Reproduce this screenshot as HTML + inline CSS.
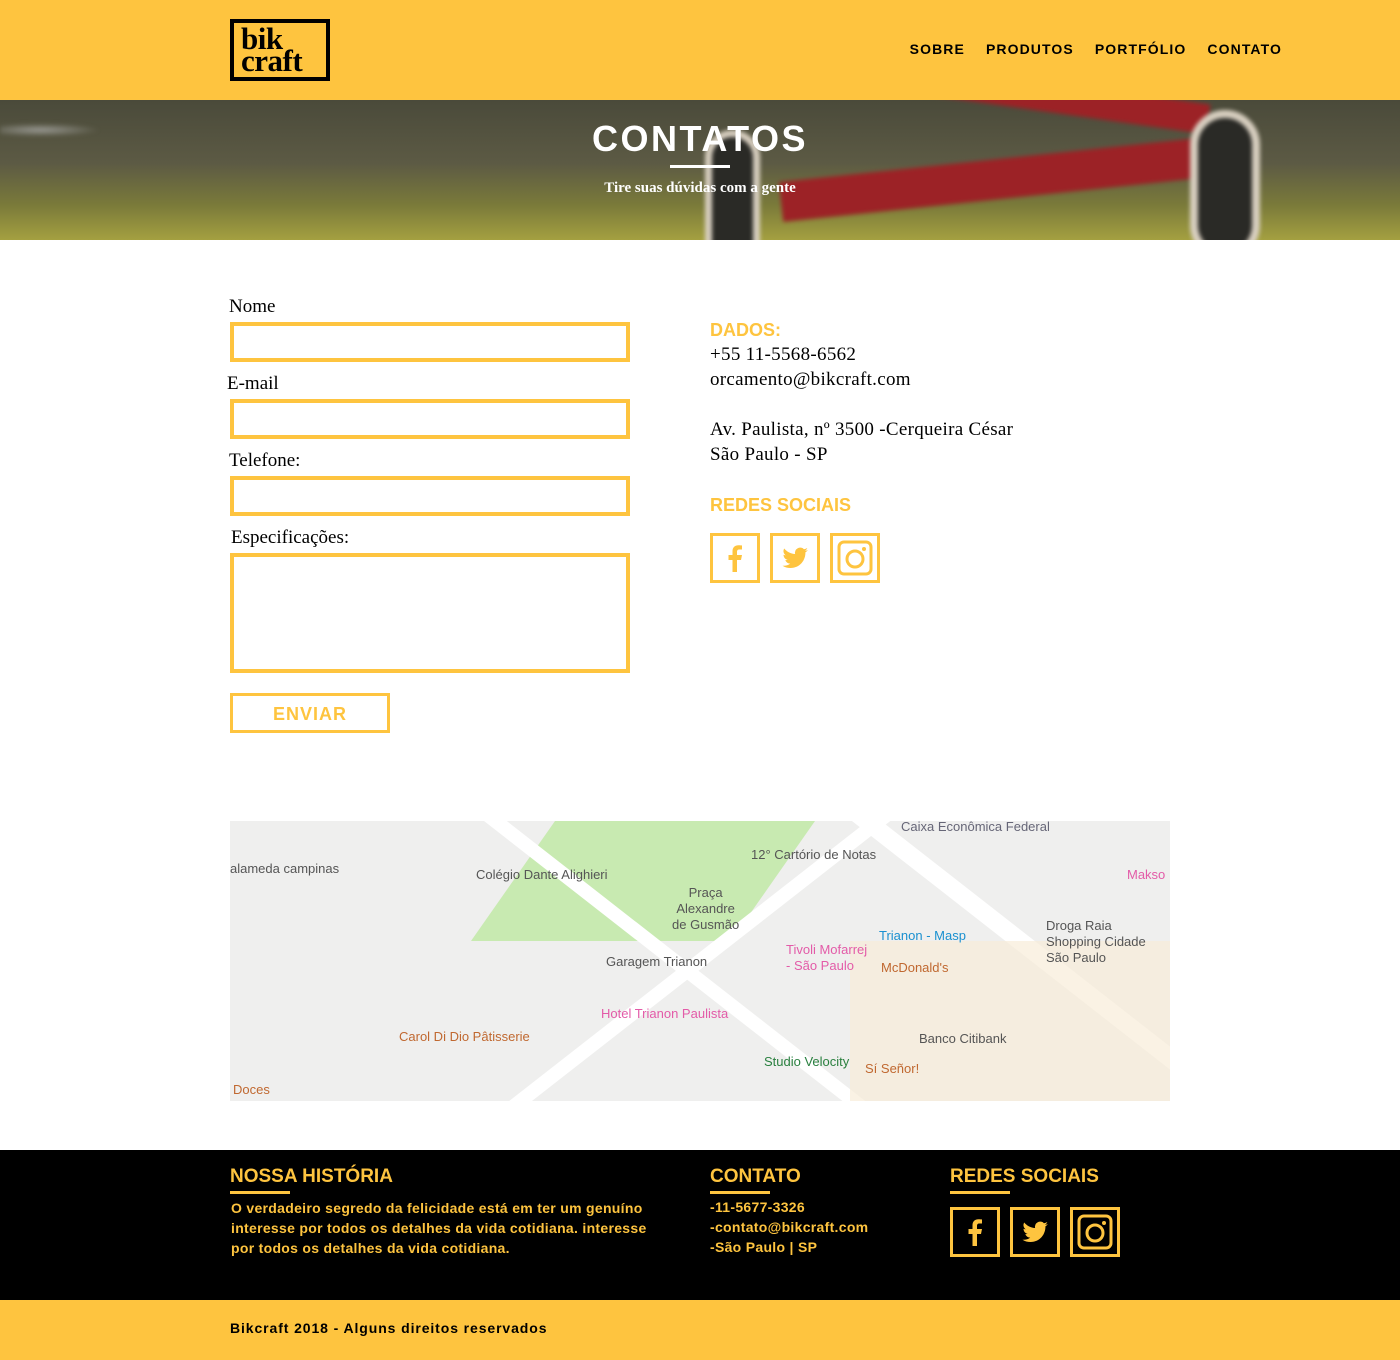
<!DOCTYPE html>
<html><head><meta charset="utf-8"><style>
*{margin:0;padding:0;box-sizing:border-box}
body{width:1400px;height:1360px;background:#fff;font-family:"Liberation Sans",sans-serif;position:relative;overflow:hidden}
.abs{position:absolute}
header{position:absolute;left:0;top:0;width:1400px;height:100px;background:#fec43f}
.logo{position:absolute;left:230px;top:19px;width:100px;height:62px;border:4px solid #000;font-family:"Liberation Serif",serif;font-weight:bold;font-size:31px;line-height:22px;padding:5px 0 0 7px;letter-spacing:-0.5px}
nav{position:absolute;top:41px;right:118px;font-weight:bold;font-size:14px;letter-spacing:1.1px}
nav span{margin-left:21px}
.hero{position:absolute;top:100px;left:0;width:1400px;height:140px;background:linear-gradient(180deg,#4a4a3a 0%,#5c5a44 45%,#7a7a3a 75%,#a4a040 100%);overflow:hidden}
.blur{filter:blur(2px)}
.hero h1{position:absolute;left:0;width:1400px;top:18px;text-align:center;color:#fff;font-size:36px;letter-spacing:2.5px}
.hero .bar{position:absolute;left:670px;top:65px;width:60px;height:3px;background:#fff}
.hero p{position:absolute;width:1400px;top:80px;text-align:center;color:#fff;font-family:"Liberation Serif",serif;font-size:15px;font-weight:bold}
label{position:absolute;font-family:"Liberation Serif",serif;font-size:19px}
.in{position:absolute;left:230px;width:400px;border:4px solid #fec43f}
.y{color:#fec43f;font-weight:bold;font-size:18px;position:absolute}
.serif{font-family:"Liberation Serif",serif;font-size:19px;line-height:25px;position:absolute}
.ic{position:absolute;width:50px;height:50px;border:3px solid #fec43f}
.ic svg{position:absolute;left:0;top:0;width:44px;height:44px}
footer{position:absolute;top:1150px;left:0;width:1400px;height:150px;background:#000}
.fh{position:absolute;color:#fec43f;font-weight:bold;font-size:19px}
.ft{position:absolute;color:#fec43f;font-weight:bold;font-size:14px;line-height:20px;letter-spacing:0.3px}
.copy{position:absolute;top:1300px;left:0;width:1400px;height:60px;background:#fec43f;font-weight:bold;font-size:14px;letter-spacing:0.9px;padding:20px 230px}
</style></head><body>
<header><div class="logo">bik<br>craft</div>
<nav><span>SOBRE</span><span>PRODUTOS</span><span>PORTFÓLIO</span><span>CONTATO</span></nav></header>
<div class="hero">
<div class="abs blur" style="left:0;top:0;width:400px;height:70px;background:radial-gradient(ellipse at 40px 30px,#9a9a94 0,transparent 60px)"></div>
<div class="abs blur" style="left:780px;top:60px;width:420px;height:40px;background:#9c2226;transform:rotate(-6deg)"></div>
<div class="abs blur" style="left:860px;top:-20px;width:350px;height:30px;background:#9c2226;transform:rotate(8deg)"></div>
<div class="abs blur" style="left:705px;top:30px;width:55px;height:140px;border-radius:28px;background:#2a2a26;border:7px solid #d8cfc0"></div>
<div class="abs blur" style="left:1190px;top:10px;width:70px;height:150px;border-radius:35px;background:#2a2a26;border:8px solid #d8cfc0"></div>
<h1>CONTATOS</h1><div class="bar"></div><p>Tire suas dúvidas com a gente</p></div>

<label style="left:229px;top:296px">Nome</label>
<div class="in" style="top:322px;height:40px"></div>
<label style="left:227px;top:373px">E-mail</label>
<div class="in" style="top:399px;height:40px"></div>
<label style="left:229px;top:450px">Telefone:</label>
<div class="in" style="top:476px;height:40px"></div>
<label style="left:231px;top:527px">Especificações:</label>
<div class="in" style="top:553px;height:120px"></div>
<div class="abs" style="left:230px;top:693px;width:160px;height:40px;border:3px solid #fec43f;color:#fec43f;font-weight:bold;font-size:18px;text-align:center;line-height:36px;letter-spacing:1px">ENVIAR</div>

<div class="y" style="left:710px;top:320px">DADOS:</div>
<div class="serif" style="left:710px;top:342px;letter-spacing:0.3px">+55 11-5568-6562<br>orcamento@bikcraft.com<br><br>Av. Paulista, nº 3500 -Cerqueira César<br>São Paulo - SP</div>
<div class="y" style="left:710px;top:495px">REDES SOCIAIS</div>
<div class="ic" style="left:710px;top:533px"><svg viewBox="0 0 44 44"><path d="M24 36V24h4l1-5h-5v-3c0-1.5.5-2.5 2.5-2.5H29V9.5c-.5 0-2-.2-3.5-.2-3.5 0-6 2-6 6V19h-4v5h4v12z" fill="#fec43f"/></svg></div>
<div class="ic" style="left:770px;top:533px"><svg viewBox="0 0 44 44"><path d="M35 14c-1 .5-2 .7-3 .8 1-.7 2-1.7 2.3-2.8-1 .6-2 1-3.3 1.3a5.2 5.2 0 0 0-8.9 4.7C17.700 17.800 13.800 15.700 11.200 12.500c-1.500 2.500-.6 5.300 1.600 6.900-.8 0-1.600-.3-2.300-.6 0 2.500 1.800 4.700 4.200 5.100-.8.2-1.600.3-2.400.1.700 2.100 2.600 3.600 4.900 3.600-2.200 1.700-4.900 2.400-7.700 2.100 2.300 1.500 5 2.300 8 2.300 9.700 0 15.200-8.200 14.900-15.600C33.400 15.800 34.300 14.900 35 14z" fill="#fec43f"/></svg></div>
<div class="ic" style="left:830px;top:533px"><svg viewBox="0 0 44 44"><rect x="6" y="6" width="32" height="32" rx="5" fill="none" stroke="#fec43f" stroke-width="3"/><circle cx="22" cy="23" r="8" fill="none" stroke="#fec43f" stroke-width="3"/><circle cx="31" cy="13" r="2" fill="#fec43f"/></svg></div>

<div class="abs" style="left:230px;top:821px;width:940px;height:280px;background:#efefee;overflow:hidden">
<div class="abs" style="left:290px;top:-20px;width:260px;height:140px;background:#c8eab1;transform:skewX(-35deg)"></div>
<div class="abs" style="left:100px;top:420px;width:1200px;height:14px;background:#fff;transform:rotate(-38deg);transform-origin:0 0"></div>
<div class="abs" style="left:200px;top:-60px;width:900px;height:14px;background:#fff;transform:rotate(38deg);transform-origin:0 0"></div>
<div class="abs" style="left:600px;top:-40px;width:600px;height:18px;background:#fff;transform:rotate(38deg);transform-origin:0 0"></div>
<div class="abs" style="left:620px;top:120px;width:320px;height:160px;background:#f8ecd8;opacity:.7"></div>
<div class="abs" style="left:0;top:40px;font-size:13px;color:#555">alameda campinas</div>
<div class="abs" style="left:246px;top:46px;font-size:13px;color:#555">Colégio Dante Alighieri</div>
<div class="abs" style="left:442px;top:64px;font-size:13px;color:#555;text-align:center;line-height:16px">Praça<br>Alexandre<br>de Gusmão</div>
<div class="abs" style="left:521px;top:26px;font-size:13px;color:#555">12° Cartório de Notas</div>
<div class="abs" style="left:671px;top:-2px;font-size:13px;color:#667">Caixa Econômica Federal</div>
<div class="abs" style="left:649px;top:107px;font-size:13px;color:#1a90d0">Trianon - Masp</div>
<div class="abs" style="left:556px;top:121px;font-size:13px;color:#e35ba8;line-height:16px">Tivoli Mofarrej<br>- São Paulo</div>
<div class="abs" style="left:651px;top:139px;font-size:13px;color:#c06830">McDonald's</div>
<div class="abs" style="left:376px;top:133px;font-size:13px;color:#555">Garagem Trianon</div>
<div class="abs" style="left:371px;top:185px;font-size:13px;color:#e35ba8">Hotel Trianon Paulista</div>
<div class="abs" style="left:169px;top:208px;font-size:13px;color:#c06830">Carol Di Dio Pâtisserie</div>
<div class="abs" style="left:534px;top:233px;font-size:13px;color:#2a8040">Studio Velocity</div>
<div class="abs" style="left:635px;top:240px;font-size:13px;color:#c06830">Sí Señor!</div>
<div class="abs" style="left:689px;top:210px;font-size:13px;color:#555">Banco Citibank</div>
<div class="abs" style="left:816px;top:97px;font-size:13px;color:#555;line-height:16px">Droga Raia<br>Shopping Cidade<br>São Paulo</div>
<div class="abs" style="left:897px;top:46px;font-size:13px;color:#e35ba8">Makso</div>
<div class="abs" style="left:3px;top:261px;font-size:13px;color:#c06830">Doces</div>
</div>

<footer></footer>
<div class="fh" style="left:230px;top:1166px">NOSSA HISTÓRIA</div>
<div class="abs" style="left:230px;top:1191px;width:60px;height:3px;background:#fec43f"></div>
<div class="ft" style="left:231px;top:1198px">O verdadeiro segredo da felicidade está em ter um genuíno<br>interesse por todos os detalhes da vida cotidiana. interesse<br>por todos os detalhes da vida cotidiana.</div>
<div class="fh" style="left:710px;top:1166px">CONTATO</div>
<div class="abs" style="left:710px;top:1191px;width:60px;height:3px;background:#fec43f"></div>
<div class="ft" style="left:710px;top:1197px">-11-5677-3326<br>-contato@bikcraft.com<br>-São Paulo | SP</div>
<div class="fh" style="left:950px;top:1166px">REDES SOCIAIS</div>
<div class="abs" style="left:950px;top:1191px;width:60px;height:3px;background:#fec43f"></div>
<div class="ic" style="left:950px;top:1207px"><svg viewBox="0 0 44 44"><path d="M24 36V24h4l1-5h-5v-3c0-1.5.5-2.5 2.5-2.5H29V9.5c-.5 0-2-.2-3.5-.2-3.5 0-6 2-6 6V19h-4v5h4v12z" fill="#fec43f"/></svg></div>
<div class="ic" style="left:1010px;top:1207px"><svg viewBox="0 0 44 44"><path d="M35 14c-1 .5-2 .7-3 .8 1-.7 2-1.7 2.3-2.8-1 .6-2 1-3.3 1.3a5.2 5.2 0 0 0-8.9 4.7C17.700 17.800 13.800 15.700 11.200 12.500c-1.500 2.500-.6 5.300 1.600 6.900-.8 0-1.600-.3-2.300-.6 0 2.500 1.800 4.700 4.200 5.100-.8.2-1.600.3-2.400.1.700 2.100 2.600 3.600 4.900 3.600-2.200 1.700-4.900 2.400-7.700 2.100 2.300 1.500 5 2.300 8 2.300 9.700 0 15.200-8.200 14.900-15.600C33.400 15.800 34.300 14.900 35 14z" fill="#fec43f"/></svg></div>
<div class="ic" style="left:1070px;top:1207px"><svg viewBox="0 0 44 44"><rect x="6" y="6" width="32" height="32" rx="5" fill="none" stroke="#fec43f" stroke-width="3"/><circle cx="22" cy="23" r="8" fill="none" stroke="#fec43f" stroke-width="3"/><circle cx="31" cy="13" r="2" fill="#fec43f"/></svg></div>
<div class="copy">Bikcraft 2018 - Alguns direitos reservados</div>
</body></html>
